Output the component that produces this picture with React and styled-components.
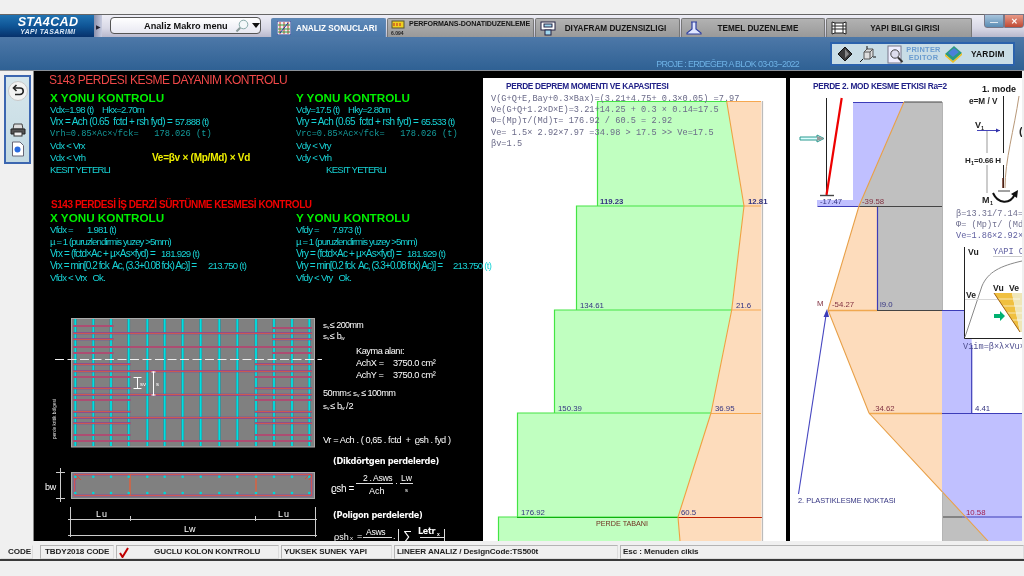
import React from "react";
import styled, { createGlobalStyle } from "styled-components";

const Global = createGlobalStyle`
  html, body { margin: 0; padding: 0; background: #f0f0f0; }
  #root { width: 1024px; height: 576px; overflow: hidden; }
`;

const SANS = `"Liberation Sans", Arial, sans-serif`;
const MONO = `"Liberation Mono", "Courier New", monospace`;

const Page = styled.div`
  width: 1024px; height: 576px; display: flex; flex-direction: column; filter: blur(.3px);
  padding-top: 14px; box-sizing: border-box; background: #f0f0f0; font-family: ${SANS}; overflow: hidden;
`;
const TitleBar = styled.header`
  height: 23px; display: flex; flex: none; border-top: 1px solid #666; box-sizing: border-box;
  background: linear-gradient(#eeeef6, #d8d8e6 60%, #b8b8cc);
`;
const Logo = styled.div`
  width: 94px; display: flex; flex-direction: column; align-items: center; justify-content: center;
  background: linear-gradient(#2173b2, #0f5596 50%, #07326c); color: #fff; padding-left: 2px; box-sizing: border-box;
`;
const LogoMain = styled.span`font: italic 700 12.6px/12px ${SANS}; letter-spacing: .3px;`;
const LogoSub = styled.span`font: italic 700 6.8px/8px ${SANS}; letter-spacing: .45px; color: #dce8f6;`;
const Grip = styled.div`
  width: 8px; display: flex; align-items: center; justify-content: center;
  background: linear-gradient(90deg, #8a90ac, #c8cce0); color: #223; font-size: 6px;
`;
const Combo = styled.div`
  margin: 2px 0 0 8px; width: 151px; height: 17px; box-sizing: border-box; border: 1px solid #555; border-radius: 4px;
  background: linear-gradient(#fff, #e8e8f2); display: flex; align-items: center; font: 700 9.2px ${SANS}; color: #111;
  padding-left: 33px; flex: none;
`;
const ComboLabel = styled.span`width: 94px; white-space: nowrap;`;
const Tabs = styled.nav`display: flex; margin-left: 10px; align-self: flex-end; gap: 1px;`;
const Tab = styled.div`
  width: ${p => p.$w}px; height: 19px; box-sizing: border-box; display: flex; align-items: center; flex: none;
  border: 1px solid ${p => (p.$active ? "#5f86b2" : "#777")}; border-bottom: none; border-radius: 2px 2px 0 0;
  background: ${p => (p.$active ? "linear-gradient(#5c88b8, #4a76a8)" : "linear-gradient(#b2b2b2, #999)")};
  color: ${p => (p.$active ? "#fff" : "#151515")}; font: 700 ${p => p.$size || 8.2}px ${SANS}; white-space: nowrap; overflow: hidden;
`;
const TabIcon = styled.span`width: ${p => p.$w || 24}px; flex: none; display: flex; justify-content: center; align-items: center; height: 100%;`;
const TabLabel = styled.span`
  flex: 1; text-align: ${p => (p.$high ? "left" : "center")}; padding-right: ${p => p.$pr || 0}px; letter-spacing: ${p => p.$ls || 0}px;
  align-self: ${p => (p.$high ? "flex-start" : "center")}; margin-top: ${p => (p.$high ? 1 : 0)}px;
`;
const WinButtons = styled.div`display: flex; margin-left: 12px; height: 14px; margin-top: -1px;`;
const WinButton = styled.div`
  width: 20px; display: flex; align-items: center; justify-content: center; border: 1px solid #778; box-sizing: border-box;
  border-radius: ${p => (p.$close ? "0 0 3px 0" : "0 0 0 3px")}; color: #fff; font: 700 8px ${SANS};
  background: ${p => (p.$close ? "linear-gradient(#e89a88, #c04a34)" : "linear-gradient(#a8c4dc, #5b8cb4)")};
`;
const BlueBar = styled.div`
  height: 34px; flex: none; display: flex; justify-content: flex-end; align-items: flex-start;
  background: linear-gradient(#4d78a8, #2f6194); border-bottom: 1px solid #8a9098; box-sizing: border-box;
`;
const ProjectName = styled.span`
  margin-top: 22px; margin-right: 31px; font: 8.9px/11px ${SANS}; color: #6eb2e6; white-space: nowrap; letter-spacing: -.66px;
`;
const ToolBox = styled.div`
  width: 185px; height: 24px; margin: 5px 9px 0 0; box-sizing: border-box; border: 2px solid #2b62ac; background: #c9dde6;
  display: flex; align-items: center; padding-left: 5px; flex: none;
`;
const PrinterLabel = styled.span`
  font: 700 7.4px/8px ${SANS}; color: #6a9cd0; text-align: center; width: 37px; letter-spacing: .3px; margin-left: 1px; flex: none;
`;
const HelpLabel = styled.span`font: 700 8.4px ${SANS}; color: #111; margin-left: 8px; letter-spacing: .25px;`;

const Main = styled.main`flex: none; height: 470px; display: flex;`;
const Side = styled.aside`width: 34px; flex: none; padding: 4px 0 0 4px; box-sizing: border-box; border-right: 1px solid #888;`;
const SideBox = styled.div`
  width: 27px; height: 89px; box-sizing: border-box; border: 2px solid #3c66b0; background: linear-gradient(#d6e6ec, #c4dae2);
  display: flex; flex-direction: column; align-items: center; padding-top: 3px;
`;
const Workspace = styled.div`flex: 1; display: flex; background: #000; margin-right: 2px; min-width: 0; overflow: hidden;`;
const Report = styled.section`width: 449px; flex: none; padding-top: 1px; position: relative; z-index: 1; height: 470px; box-sizing: border-box;`;
const ReportTitle = styled.h2`
  margin: 0 0 ${p => p.$mb}px ${p => p.$x}px; font: ${p => p.$w} ${p => p.$s}px/16px ${SANS}; color: ${p => p.$c}; white-space: nowrap; letter-spacing: ${p => p.$ls}px;
`;
const CheckGrid = styled.div`display: grid; grid-template-columns: 246px 200px; padding-left: 16px; margin-bottom: ${p => p.$mb}px;`;
const CheckHead = styled.div`font: 700 11.7px/13px ${SANS}; color: #00f000; white-space: nowrap;`;
const CheckLine = styled.div`
  font: ${p => (p.$mono ? `8.7px/12px ${MONO}` : `${p.$fs || 9.6}px/12px ${SANS}`)}; height: 12px; white-space: pre;
  color: ${p => (p.$mono ? "#149c9c" : "#17d3d6")}; letter-spacing: ${p => (p.$mono ? 0 : p.$ls ?? -0.75)}px;
  padding-left: ${p => p.$in || 0}px; display: flex;
`;
const LineLabel = styled.span`display: inline-block; width: ${p => p.$w}px; flex: none;`;
const LineValue = styled.span`font-size: 9.6px; letter-spacing: -.75px;`;
const Formula = styled.span`position: absolute; margin-left: 102px; font: 700 10px/12px ${SANS}; color: #f0f000; letter-spacing: -.25px;`;
const DrawingSvg = styled.svg`display: block; margin-top: 16px;`;

const Chart = styled.section`
  flex: none; width: ${p => p.$w}px; margin: 7px ${p => p.$mr}px 0 0; height: 463px; background: #fff; position: relative; overflow: hidden;
`;
const ChartSvg = styled.svg`display: block;`;
const ChartHeading = styled.h3`
  position: absolute; top: ${p => p.$t}px; left: ${p => p.$l}px; margin: 0; font: 700 8.3px/12px ${SANS}; color: #222288; white-space: nowrap; letter-spacing: -.3px;
`;
const ChartNotes = styled.div`position: absolute; top: 16px; left: 8px;`;
const NoteLine = styled.div`font: 8.65px/11.2px ${MONO}; color: #6a6a88; white-space: pre;`;

const StatusBar = styled.footer`
  flex: none; height: 20px; display: flex; padding-top: 4px; gap: 2px; box-sizing: border-box; border-bottom: 2px solid #3a3a3a; padding-bottom: 1px;
`;
const StatusItem = styled.div`
  width: ${p => p.$w}px; margin-left: ${p => p.$ml || 0}px; flex: ${p => (p.$grow ? 1 : "none")}; box-sizing: border-box; height: 14px;
  border: 1px solid ${p => (p.$flat ? "#f0f0f0" : "#b4b4b4")}; border-right-color: #ddd; border-bottom-color: #ddd;
  font: 700 8.1px/12px ${SANS}; color: #222; white-space: nowrap; display: flex; align-items: center;
  padding-left: ${p => p.$pl}px; letter-spacing: -.1px;
`;
const StatusText = styled.span`margin-left: 25px;`;

const T = styled.text`
  font-family: ${p => (p.$mono ? MONO : p.$dv ? `"DejaVu Sans", sans-serif` : SANS)};
  font-size: ${p => p.$s || 9}px; font-weight: ${p => (p.$b ? 700 : 400)}; fill: ${p => p.$c || "#fff"};
  letter-spacing: ${p => p.$ls || 0}px; white-space: pre;
`;

const tight = { fs: 10, ls: -0.62 };
const checksA = {
  x: [
    { t: "Vdx=1.98 (t)", w: 52, v: "Hkx=2.70m" },
    { t: "Vrx = Ach (0.65  fctd + rsh fyd) =", w: 125, v: "57.888 (t)", ...tight },
    { m: "Vrh=0.85×Ac×√fck=   178.026 (t)" },
    { t: "Vdx < Vrx" },
    { t: "Vdx < Vrh", f: true },
    { t: "KESIT YETERLI" },
  ],
  y: [
    { t: "Vdy=17.5 (t)", w: 52, v: "Hky=2.80m" },
    { t: "Vry = Ach (0.65  fctd + rsh fyd) =", w: 125, v: "65.533 (t)", ...tight },
    { m: "Vrc=0.85×Ac×√fck=   178.026 (t)" },
    { t: "Vdy < Vry" },
    { t: "Vdy < Vrh" },
    { t: "KESIT YETERLI", in: 30 },
  ],
};
const checksB = {
  x: [
    { t: "Vfdx =", w: 37, v: "1.981 (t)" },
    { t: "µ = 1 (puruzlendirmis yuzey >5mm)", ls: -0.9 },
    { t: "Vrx = (fctd×Ac + µ×As×fyd) =", w: 111, v: "181.929 (t)", fs: 10, ls: -0.85 },
    { t: "Vrx = min[0.2 fck  Ac, (3.3+0.08 fck) Ac)] =", w: 158, v: "213.750 (t)", fs: 10, ls: -0.92 },
    { t: "Vfdx < Vrx   Ok." },
  ],
  y: [
    { t: "Vfdy =", w: 36, v: "7.973 (t)" },
    { t: "µ = 1 (puruzlendirmis yuzey >5mm)", ls: -0.9 },
    { t: "Vry = (fctd×Ac + µ×As×fyd) =", w: 111, v: "181.929 (t)", fs: 10, ls: -0.85 },
    { t: "Vry = min[0.2 fck  Ac, (3.3+0.08 fck) Ac)] =", w: 157, v: "213.750 (t)", fs: 10, ls: -0.92 },
    { t: "Vfdy < Vry   Ok." },
  ],
};

function Column({ head, items }) {
  return (
    <div>
      <CheckHead>{head}</CheckHead>
      {items.map((l, i) => {
        if (l.m) return <CheckLine key={i} $mono>{l.m}</CheckLine>;
        return (
          <CheckLine key={i} $in={l.in} $fs={l.fs} $ls={l.ls}>
            {l.v ? <LineLabel $w={l.w}>{l.t}</LineLabel> : l.t}
            {l.v ? <LineValue>{l.v}</LineValue> : null}
            {l.f ? <Formula>Ve=βv × (Mp/Md) × Vd</Formula> : null}
          </CheckLine>
        );
      })}
    </div>
  );
}

const vx = [75.3, 93.3, 111, 128.7, 147.3, 164.7, 182.7, 200.7, 219.3, 237.3, 256, 274, 292, 309.3];
const shortTop = [[326, 1, 0], [328, 0, 1], [339.3, 1, 1], [353, 1, 1]];
const fullBars = [333.3, 347, 371.3, 394.7, 417.7, 441];
const shortLow = [364.3, 377, 388.3, 400, 411.7, 423.3, 435];

function Rebar({ x1, x2, y }) {
  return (
    <g>
      <line x1={x1} x2={x2} y1={y} y2={y} stroke="#7a3aa8" strokeWidth="2" />
      <line x1={x1} x2={x2} y1={y} y2={y} stroke="#e0603c" strokeWidth="1" />
    </g>
  );
}

function WallDrawing() {
  return (
    <DrawingSvg width="449" height="241" viewBox="34 300 449 241">
      <rect x="71.5" y="318.5" width="243" height="128.5" fill="#808080" stroke="#aaa" />
      {vx.map(x => (
        <g key={x}>
          <line x1={x} x2={x} y1="319" y2="446" stroke="#2f7f90" strokeWidth="2.8" />
          <line x1={x} x2={x} y1="319" y2="446" stroke="#00e0e0" strokeWidth="1.8" />
        </g>
      ))}
      {fullBars.map(y => <Rebar key={y} x1={73} x2={312} y={y} />)}
      {shortTop.map(([y, l, r]) => (
        <g key={y}>
          {l ? <Rebar x1={73} x2={113.5} y={y} /> : null}
          {r ? <Rebar x1={272} x2={312} y={y} /> : null}
        </g>
      ))}
      {shortLow.map(y => (
        <g key={y}>
          <Rebar x1={73} x2={130.5} y={y} />
          <Rebar x1={255} x2={312} y={y} />
        </g>
      ))}
      <line x1="55" x2="322" y1="359.5" y2="359.5" stroke="#eee" strokeWidth="1" strokeDasharray="9 3.5" />
      <path d="M133.5 377.5h8M133.5 388.5h8M137.5 377.5v11M153.5 371.5v24" stroke="#fff" strokeWidth="1" fill="none" />
      <path d="M151.5 372h4M151.5 395h4" stroke="#fff" />
      <T x="140" y="386" $s={6}>sv</T>
      <T x="156" y="386" $s={6}>s</T>
      <T x="0" y="0" $s={4.8} $c="#ddd" transform="translate(56 439) rotate(-90)">perde kritik bölgesi</T>

      <rect x="71.5" y="472.5" width="243" height="26" fill="#808080" stroke="#aaa" />
      <rect x="74.5" y="474.5" width="237" height="21" fill="none" stroke="#8a2fb0" strokeWidth="1.6" />
      <rect x="74.5" y="474.5" width="237" height="21" fill="none" stroke="#e0603c" strokeWidth=".8" />
      <path d="M130 474v22M256 474v22" stroke="#e0603c" strokeWidth="1.4" fill="none" />
      <path d="M75 474l6 6M309 480l3-5M75 480l4-3M305 479l5-5" stroke="#d0503c" fill="none" />
      {vx.map(x => (
        <g key={x}>
          <circle cx={x} cy="476.8" r="1.3" fill="#00d8d8" />
          <circle cx={x} cy="493" r="1.3" fill="#00d8d8" />
        </g>
      ))}
      <path d="M60.5 468v34M56 472.5h9M56 498.5h9" stroke="#ccc" fill="none" />
      <T x="45" y="490" $s={9} $ls={-.3}>bw</T>
      <path d="M70.5 507v30M315.5 507v30M68 519.5h249M68 535.5h249M130.5 516v5M255.5 516v5" stroke="#ccc" fill="none" />
      <T x="96" y="517" $s={9} $ls={1}>Lu</T>
      <T x="278" y="517" $s={9} $ls={1}>Lu</T>
      <T x="184" y="532" $s={9}>Lw</T>

      <T x="323" y="328" $s={8} $ls={-.3}>s</T>
      <T x="327" y="329" $s={5}>v</T>
      <T x="330" y="328" $s={9} $ls={-.6}>≤ 200mm</T>
      <T x="323" y="339" $s={8} $ls={-.3}>s</T>
      <T x="327" y="340" $s={5}>v</T>
      <T x="330" y="339" $s={9} $ls={-.3}>≤ b</T>
      <T x="341" y="340" $s={5}>w</T>
      <T x="356" y="354" $s={9.2} $ls={-.45}>Kayma alanı:</T>
      <T x="356" y="366" $s={9.2} $ls={-.35}>AchX =</T>
      <T x="393" y="366" $s={9.2} $ls={-.35}>3750.0 cm²</T>
      <T x="356" y="378" $s={9.2} $ls={-.35}>AchY =</T>
      <T x="393" y="378" $s={9.2} $ls={-.35}>3750.0 cm²</T>
      <T x="323" y="396" $s={9.2} $ls={-.5}>50mm</T>
      <T x="347" y="396" $s={8} $ls={-.3}>≤ s</T>
      <T x="357" y="397" $s={5}>v</T>
      <T x="361" y="396" $s={9.2} $ls={-.55}>≤ 100mm</T>
      <T x="323" y="409" $s={8} $ls={-.3}>s</T>
      <T x="327" y="410" $s={5}>v</T>
      <T x="330" y="409" $s={9.2} $ls={-.3}>≤ b</T>
      <T x="341" y="410" $s={5}>w</T>
      <T x="346" y="409" $s={9.2}>/2</T>
      <T x="323" y="443" $s={9.2} $ls={-.42}>Vr = Ach . ( 0,65 . fctd  +  ϱsh . fyd )</T>
      <T x="333" y="464" $s={8.2} $b $dv $ls={-.3}>(Dikdörtgen perdelerde)</T>
      <T x="331" y="492" $s={10} $ls={-.4}>ϱsh =</T>
      <T x="363" y="481" $s={8.6} $ls={-.35}>2 . Asws</T>
      <path d="M356 483.5h37M400 483.5h13" stroke="#ddd" fill="none" />
      <T x="369" y="494" $s={9}>Ach</T>
      <T x="395" y="486" $s={9}>·</T>
      <T x="401" y="481" $s={8.6}>Lw</T>
      <T x="405" y="492" $s={6}>s</T>
      <T x="333" y="518" $s={8.2} $b $dv $ls={-.3}>(Poligon perdelerde)</T>
      <T x="334" y="540" $s={9}>ϱsh</T>
      <T x="350" y="540" $s={6}>x</T>
      <T x="357" y="539" $s={9}>=</T>
      <T x="366" y="535" $s={8.6} $ls={-.3}>Asws</T>
      <path d="M363 537.5h29M420 537.5h24" stroke="#ddd" fill="none" />
      <T x="393" y="539" $s={9}>.</T>
      <path d="M398.5 529v12M444.5 529v12" stroke="#ddd" fill="none" />
      <T x="403" y="540" $s={13}>∑</T>
      <T x="418" y="534" $s={8} $b $dv $ls={-.3}>Letr</T>
      <T x="437" y="536" $s={5} $b>x</T>
    </DrawingSvg>
  );
}

function MomentChart() {
  const curve = "726.7,101.5 744,206 731.7,310 711,413 678,517 680,541";
  return (
    <ChartSvg width="303" height="463" viewBox="483 78 303 463">
      <polygon points={`${curve} 761.5,541 761.5,101.5`} fill="#fddcbc" />
      <path d="M597 101.5H727L744 206H597Z" fill="#c0ffc0" />
      <polygon points="576,206 744,206 731.7,310 576,310" fill="#c0ffc0" />
      <polygon points="554,310 731.7,310 711,413 554,413" fill="#c0ffc0" />
      <polygon points="517.7,413 711,413 678,517 517.7,517" fill="#c0ffc0" />
      <polygon points="498,517 678,517 680,541 498,541" fill="#c0ffc0" />
      <path d="M597.5 206V101.5H727M576.5 310V206H744M554.5 413V310H732M517.5 517V413H711M498.5 541V517H678" fill="none" stroke="#44e444" strokeWidth="1.2" />
      <path d="M744 206H761M732 310H761M711 413.5H761M727 101.5H761" stroke="#f6a850" strokeWidth="1.2" fill="none" />
      <path d="M678 517.5H762" stroke="#c02000" strokeWidth="1" />
      <path d="M517 517.5H678" stroke="#10b010" strokeWidth="1" />
      <polyline points={curve} fill="none" stroke="#f0a040" strokeWidth="1.1" />
      <path d="M762.5 101V541" stroke="#bbb" strokeWidth="1.2" />
      <T x="600" y="204" $s={7.8} $b $c="#333380">119.23</T>
      <T x="748" y="204" $s={7.8} $b $c="#333380">12.81</T>
      <T x="580" y="307.5" $s={7.8} $c="#333380">134.61</T>
      <T x="736" y="307.5" $s={7.8} $c="#333380">21.6</T>
      <T x="558" y="411" $s={7.8} $c="#333380">150.39</T>
      <T x="715" y="411" $s={7.8} $c="#333380">36.95</T>
      <T x="521" y="515" $s={7.8} $c="#333380">176.92</T>
      <T x="681" y="515" $s={7.8} $c="#333380">60.5</T>
      <T x="596" y="526" $s={7.2} $c="#703020">PERDE TABANI</T>
    </ChartSvg>
  );
}

function ShearChart() {
  return (
    <ChartSvg width="232" height="463" viewBox="790 78 232 463">
      <polygon points="853,102 904,102 859,206 817,206 817,200 853,200" fill="#c0c0ff" />
      <polygon points="904,102 942,102 942,206 859,206" fill="#c0c0c0" />
      <polygon points="877.5,206 942,206 942,310 877.5,310" fill="#c0c0c0" />
      <polygon points="859,206 877.5,206 877.5,310 828,310" fill="#fddcbc" />
      <polygon points="828,310 942,310 942,413 869,413" fill="#fddcbc" />
      <polygon points="869,413 942,413 942,492" fill="#fddcbc" />
      <polygon points="942,310 971.7,310 971.7,413 942,413" fill="#c0c0ff" />
      <polygon points="942,413 1022,413 1022,541 988,541 942,492" fill="#c0c0ff" />
      <polygon points="942,492 988,541 942,541" fill="#c0c0c0" />
      <path d="M853 102.5H904M817.5 206.5H859M877.5 206V310M942 310.5H964M971.7 345V413M942 413.5H1022M962 517H1022" stroke="#3c3cb8" strokeWidth="1.2" fill="none" />
      <path d="M904 102H942M859 206.5H942M877 310.5H942M942 517H962" stroke="#444" strokeWidth="1.1" fill="none" />
      <path d="M828 310.5H877M869 413.5H942" stroke="#f0a850" strokeWidth="1.3" fill="none" />
      <polyline points="904,102 859,206 828,310 869,413 988,541" fill="none" stroke="#e8a048" strokeWidth="1.1" />
      <path d="M942.5 102V310M942.5 492V541" stroke="#b4b4b4" fill="none" />
      <path d="M798.5 494L826.5 312" stroke="#4444c0" strokeWidth="1.1" fill="none" />
      <polygon points="827,309 823.5,317 829,317" fill="#3c3cb8" />

      <path d="M826.5 98V195" stroke="#222" strokeWidth="1" />
      <path d="M841.7 98L826.5 195" stroke="#ee0000" strokeWidth="2.2" />
      <path d="M820 195.5H834" stroke="#444" strokeWidth="1.4" />
      <path d="M800 137H817V135L824 138.5L817 142V140H800Z" fill="#dff" stroke="#2a9a90" strokeWidth="1" />
      <polygon points="817,136 824,138.5 817,141" fill="#999" />

      <T x="820" y="204" $s={7.8} $c="#333380">-17.47</T>
      <T x="862" y="204" $s={7.8} $c="#803040">-39.58</T>
      <T x="817" y="306" $s={7.8} $c="#803040">M</T>
      <T x="832" y="307" $s={7.8} $c="#803040">-54.27</T>
      <T x="880" y="307" $s={7.8} $c="#333380">l9.0</T>
      <T x="873" y="411" $s={7.8} $c="#803040">.34.62</T>
      <T x="975" y="411" $s={7.8} $c="#333380">4.41</T>
      <T x="966" y="515" $s={7.8} $c="#a02050">10.58</T>
      <T x="798" y="503" $s={7.4} $c="#333380">2. PLASTIKLESME NOKTASI</T>

      <rect x="957" y="78" width="65" height="162" fill="#fff" />
      <T x="982" y="92" $s={9} $b $c="#111">1. mode</T>
      <T x="969" y="104" $s={8.2} $b $c="#222">e=M / V</T>
      <path d="M1003.5 96V188" stroke="#222" fill="none" />
      <path d="M1019 96C1014 130 1005 160 1005 188" stroke="#b89878" strokeWidth="1" fill="none" />
      <path d="M1003 178V188" stroke="#5a2010" strokeWidth="1.4" />
      <path d="M998 191h12" stroke="#444" />
      <T x="975" y="128" $s={9} $b $c="#222">V</T>
      <T x="981" y="130" $s={5.5} $b $c="#222">1</T>
      <path d="M977 130.5H1000" stroke="#4444b8" />
      <polygon points="1000,130.5 996,128.5 996,132.5" fill="#3030a8" />
      <path d="M987 131V193" stroke="#999" />
      <rect x="964" y="153" width="40" height="12" fill="#fff" />
      <T x="965" y="163" $s={8} $b $c="#222">H</T>
      <T x="971" y="165" $s={5.5} $b $c="#222">1</T>
      <T x="974" y="163" $s={8} $b $c="#222" $ls={-.2}>=0.66 H</T>
      <T x="982" y="203" $s={9} $b $c="#222">M</T>
      <T x="990" y="205" $s={5.5} $b $c="#222">1</T>
      <path d="M993 193C998 204 1010 205 1015 194" stroke="#111" strokeWidth="2" fill="none" />
      <polygon points="1018,190 1011,194 1017,198" fill="#111" />
      <T x="1019" y="135" $s={11} $b $c="#222">(</T>
      <T x="956" y="216" $s={8.6} $mono $c="#707090">β=13.31/7.14=</T>
      <T x="956" y="227" $s={8.6} $mono $c="#707090">Φ= (Mp)τ/ (Md)τ</T>
      <T x="956" y="238" $s={8.6} $mono $c="#6060a0">Ve=1.86×2.92×</T>

      <rect x="964" y="247" width="58" height="91" fill="#fff" />
      <path d="M964.5 247V338.5H1022" stroke="#222" strokeWidth="1" fill="none" />
      <T x="968" y="255" $s={8.6} $b $c="#222">Vu</T>
      <T x="993" y="254" $s={8.6} $mono $c="#6060a0">YAPI C</T>
      <path d="M993 256.5H1022" stroke="#ccc" />
      <path d="M965 337L982 286C988 272 1000 266 1022 261" stroke="#888" fill="none" />
      <T x="966" y="298" $s={8.6} $b $c="#222">Ve</T>
      <path d="M965 299.5H1022" stroke="#d8d8d8" />
      <T x="993" y="291" $s={8.6} $b $c="#222">Vu</T>
      <T x="1009" y="291" $s={8.6} $b $c="#222">Ve</T>
      <polygon points="994,293 1012,293 1020,332" fill="#f0c040" />
      <polygon points="1012,293 1022,293 1022,332 1020,332" fill="#efe6b8" />
      <path d="M998 299h22M1003 306h19M1007 313h15M1011 320h11" stroke="#fff" strokeWidth=".6" />
      <path d="M1020 332L994 293" stroke="#a06010" />
      <path d="M994 314h6v-3l5 5-5 5v-3h-6z" fill="#00b070" />
      <T x="963" y="348.5" $s={8.6} $mono $c="#505090">V1im=β×λ×Vu×</T>
    </ChartSvg>
  );
}

const BackIcon = () => (
  <svg width="22" height="22" viewBox="0 0 22 22">
    <circle cx="11" cy="11" r="9.5" fill="#f2f2f2" stroke="#c8c8c8" />
    <path d="M7 8H13A3.2 3.2 0 0 1 13 14.5H8" stroke="#222" strokeWidth="1.6" fill="none" />
    <path d="M9.5 5L6.5 8L9.5 11" stroke="#222" strokeWidth="1.6" fill="none" />
  </svg>
);
const PrintGlyph = styled.svg`margin-top: 21px;`;
const PageGlyph = styled.svg`margin-top: 4px;`;
const PrintIcon = () => (
  <PrintGlyph width="16" height="14" viewBox="0 0 16 14">
    <path d="M4 1H12L13 6H3Z" fill="#ddd" stroke="#444" />
    <path d="M1 6H15V11H1Z" fill="#555" stroke="#222" />
    <rect x="4" y="9" width="8" height="4" fill="#eee" stroke="#333" />
  </PrintGlyph>
);
const PageIcon = () => (
  <PageGlyph width="14" height="16" viewBox="0 0 14 16">
    <path d="M1.5 1H9L12.5 4.5V15H1.5Z" fill="#fff" stroke="#667" />
    <circle cx="6.5" cy="8.5" r="3" fill="#2a6ce0" />
  </PageGlyph>
);
const SearchGlyph = styled.svg`margin-left: -3px;`;
const CaretGlyph = styled.svg`margin-left: 3px;`;
const SearchIcon = () => (
  <SearchGlyph width="14" height="14" viewBox="0 0 14 14">
    <circle cx="8.5" cy="5.5" r="4.3" fill="#f4f8fa" stroke="#8aa" />
    <path d="M5.2 8.8L1.5 12.5" stroke="#8a9a9a" strokeWidth="2" />
  </SearchGlyph>
);
const CaretIcon = () => (
  <CaretGlyph width="8" height="5" viewBox="0 0 8 5">
    <path d="M0 0H8L4 5Z" fill="#111" />
  </CaretGlyph>
);
const ResultIcon = () => (
  <svg width="14" height="14" viewBox="0 0 14 14">
    <rect width="14" height="14" fill="#eee" stroke="#203090" />
    <path d="M3 1V13M7 1V13M11 1V13" stroke="#d03030" />
    <path d="M1 4H13M1 8H13M1 11H13" stroke="#30a040" />
    <path d="M3 12L11 2" stroke="#2030a0" />
  </svg>
);
const PerfIcon = () => (
  <svg width="16" height="17" viewBox="0 0 16 17">
    <rect x="1" y="1" width="12" height="7" fill="#f0d020" stroke="#553" />
    <path d="M3 3v3M6 3v3M9 3v3" stroke="#c02020" />
    <text x="0" y="15" fontSize="5" fontWeight="700" fontFamily={SANS} fill="#222">6.094</text>
  </svg>
);
const DiaphragmIcon = () => (
  <svg width="16" height="15" viewBox="0 0 16 15">
    <rect x="1" y="1" width="14" height="8" fill="#fff" stroke="#224" />
    <rect x="4" y="3" width="8" height="3" fill="#9fd6ee" stroke="#224" />
    <rect x="5" y="9" width="6" height="5" fill="#9fd6ee" stroke="#224" />
  </svg>
);
const FoundationIcon = () => (
  <svg width="18" height="14" viewBox="0 0 18 14">
    <path d="M6 1H12M7 1V8L2 12V13H16V12L11 8V1" fill="#dfe6ff" stroke="#3040a0" strokeWidth="1.2" />
  </svg>
);
const BuildingIcon = () => (
  <svg width="16" height="14" viewBox="0 0 16 14">
    <path d="M1 1L4 2H12L15 1V13L12 12H4L1 13ZM4 2V12M12 2V12M1 5H15M1 8H15" fill="#fff" stroke="#222" strokeWidth="1" />
  </svg>
);
const DiamondIcon = () => (
  <svg width="16" height="16" viewBox="0 0 16 16">
    <path d="M8 1L15 8L8 15L1 8Z" fill="#3a3a3a" stroke="#111" />
    <path d="M8 3L12 8L8 12Z" fill="#888" />
  </svg>
);
const CubeGlyph = styled.svg`margin-left: 6px; flex: none;`;
const PreviewGlyph = styled.svg`margin-left: 10px; margin-top: 1px; flex: none;`;
const BooksGlyph = styled.svg`margin-left: 2px; flex: none;`;
const CubeIcon = () => (
  <CubeGlyph width="18" height="17" viewBox="0 0 18 17">
    <path d="M5 6L8 3H14V10L11 13H5Z" fill="#ddd" stroke="#555" />
    <path d="M5 6H11V13M11 6L14 3" fill="none" stroke="#555" />
    <path d="M8 3V0M4 13L1 16M14 11H17" stroke="#111" strokeWidth="1" />
  </CubeGlyph>
);
const PreviewIcon = () => (
  <PreviewGlyph width="17" height="19" viewBox="0 0 17 19">
    <rect x="1" y="1" width="13" height="17" fill="#eef" stroke="#778" />
    <circle cx="8" cy="9" r="4.2" fill="#dde" stroke="#444" />
    <path d="M11 12.5L15.5 17" stroke="#333" strokeWidth="2" />
  </PreviewGlyph>
);
const BooksIcon = () => (
  <BooksGlyph width="19" height="19" viewBox="0 0 19 19">
    <path d="M1 9L10 1L18 8L9 16Z" fill="#2a9a80" />
    <path d="M1 11L9 18L18 10L18 8L9 16L1 9Z" fill="#f0c020" />
    <path d="M4 8L10 3L15 7L9 12Z" fill="#4a80d8" />
  </BooksGlyph>
);

export default function App() {
  return (
    <Page>
      <Global />
      <TitleBar>
        <Logo>
          <LogoMain>STA4CAD</LogoMain>
          <LogoSub>YAPI TASARIMI</LogoSub>
        </Logo>
        <Grip>▶</Grip>
        <Combo>
          <ComboLabel>Analiz Makro menu</ComboLabel>
          <SearchIcon />
          <CaretIcon />
        </Combo>
        <Tabs>
          <Tab $w={115} $active><TabIcon><ResultIcon /></TabIcon><TabLabel $pr={8}>ANALIZ SONUCLARI</TabLabel></Tab>
          <Tab $w={147} $size={7.1}><TabIcon $w={21}><PerfIcon /></TabIcon><TabLabel $high $ls={-.1}>PERFORMANS-DONATIDUZENLEME</TabLabel></Tab>
          <Tab $w={145}><TabIcon><DiaphragmIcon /></TabIcon><TabLabel $pr={8}>DIYAFRAM DUZENSIZLIGI</TabLabel></Tab>
          <Tab $w={144}><TabIcon><FoundationIcon /></TabIcon><TabLabel $pr={14}>TEMEL DUZENLEME</TabLabel></Tab>
          <Tab $w={146}><TabIcon><BuildingIcon /></TabIcon><TabLabel $pr={12}>YAPI BILGI GIRISI</TabLabel></Tab>
        </Tabs>
        <WinButtons>
          <WinButton>—</WinButton>
          <WinButton $close>✕</WinButton>
        </WinButtons>
      </TitleBar>
      <BlueBar>
        <ProjectName>PROJE : ERDEĞER A BLOK 03-03--2022</ProjectName>
        <ToolBox>
          <DiamondIcon />
          <CubeIcon />
          <PreviewIcon />
          <PrinterLabel>PRINTER<br />EDITOR</PrinterLabel>
          <BooksIcon />
          <HelpLabel>YARDIM</HelpLabel>
        </ToolBox>
      </BlueBar>
      <Main>
        <Side>
          <SideBox>
            <BackIcon />
            <PrintIcon />
            <PageIcon />
          </SideBox>
        </Side>
        <Workspace>
          <Report>
            <ReportTitle $x={15} $s={12} $w={400} $c="#f04848" $ls={-.5} $mb={3}>S143 PERDESI KESME DAYANIM KONTROLU</ReportTitle>
            <CheckGrid $mb={21}>
              <Column head="X YONU KONTROLU" items={checksA.x} />
              <Column head="Y YONU KONTROLU" items={checksA.y} />
            </CheckGrid>
            <ReportTitle $x={17} $s={10} $w={700} $c="#f00000" $ls={-.45} $mb={-2}>S143 PERDESİ İŞ DERZİ SÜRTÜNME KESMESİ KONTROLU</ReportTitle>
            <CheckGrid $mb={0}>
              <Column head="X YONU KONTROLU" items={checksB.x} />
              <Column head="Y YONU KONTROLU" items={checksB.y} />
            </CheckGrid>
            <WallDrawing />
          </Report>
          <Chart $w={303} $mr={4}>
            <MomentChart />
            <ChartHeading $t={2} $l={23}>PERDE DEPREM MOMENTI VE KAPASITESI</ChartHeading>
            <ChartNotes>
              <NoteLine>V(G+Q+E,Bay+0.3×Bax)=(3.21+4.75+ 0.3×0.05) =7.97</NoteLine>
              <NoteLine>Ve(G+Q+1.2×D×E)=3.21+14.25 + 0.3 × 0.14=17.5</NoteLine>
              <NoteLine>Φ=(Mp)τ/(Md)τ= 176.92 / 60.5 = 2.92</NoteLine>
              <NoteLine>Ve= 1.5× 2.92×7.97 =34.98 &gt; 17.5 &gt;&gt; Ve=17.5</NoteLine>
              <NoteLine>βv=1.5</NoteLine>
            </ChartNotes>
          </Chart>
          <Chart $w={232} $mr={0}>
            <ShearChart />
            <ChartHeading $t={2} $l={23}>PERDE 2. MOD KESME ETKISI Ra=2</ChartHeading>
          </Chart>
        </Workspace>
      </Main>
      <StatusBar>
        <StatusItem $w={33} $pl={7} $flat>CODE</StatusItem>
        <StatusItem $w={74} $ml={5} $pl={4}>TBDY2018 CODE</StatusItem>
        <StatusItem $w={163} $pl={2}>
          <svg width="10" height="11" viewBox="0 0 10 11"><path d="M1 6L3.5 10L9 1" stroke="#c00000" strokeWidth="2" fill="none" /></svg>
          <StatusText>GUCLU KOLON KONTROLU</StatusText>
        </StatusItem>
        <StatusItem $w={111} $pl={2}>YUKSEK SUNEK YAPI</StatusItem>
        <StatusItem $w={224} $pl={2}>LINEER ANALIZ / DesignCode:TS500t</StatusItem>
        <StatusItem $grow $pl={2}>Esc : Menuden cikis</StatusItem>
      </StatusBar>
    </Page>
  );
}
